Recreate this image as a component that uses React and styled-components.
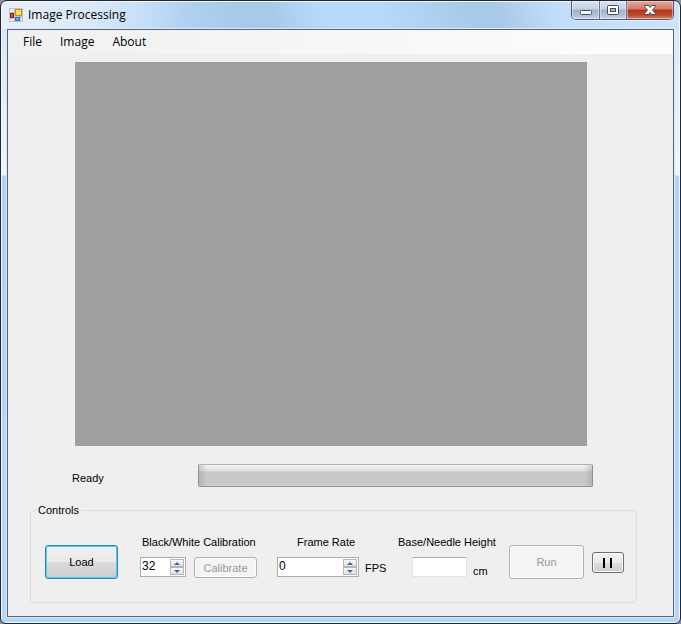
import React from "react";
import styled, { createGlobalStyle, css } from "styled-components";

const Global = createGlobalStyle`
  *, *::before, *::after { box-sizing: border-box; }
  html, body, #root { height: 100%; }
  body { margin: 0; background: #8b8f94; overflow: hidden; }
  button, input { font: inherit; color: inherit; }
`;

const Window = styled.div`
  display: flex;
  flex-direction: column;
  height: 100%;
  padding: 0 6px 6px;
  border: 1px solid #23262f;
  border-radius: 7px 7px 6px 6px;
  box-shadow: inset 0 0 0 1px #f2f8ff;
  background:
    linear-gradient(100deg, #e6f0fa 0, #dbe9f9 90px, rgba(185, 215, 245, 0) 180px) 0 0 / 100% 28px no-repeat,
    linear-gradient(70deg, #b7d7f7 0, #b7d7f7 22%, #a9c9e8 35%, #a9c9e8 40%, #b7d9f9 47%, #b7d9f9 56%, #a9c9e8 69%, #a9c9e8 73%, #c0ddfb 81%, #cfe3fa 100%) 0 0 / 100% 28px no-repeat,
    linear-gradient(#d5e5f6 0, #edf5fd 174px, #b3d3f5 175px, #b3d6fb 100%);
  font: 11px/14px "Liberation Sans", Arial, sans-serif;
  color: #000;
`;

const TitleBar = styled.header`
  display: flex;
  align-items: flex-start;
  height: 28px;
  flex: none;
  padding-left: 2px;
`;

const Title = styled.h1`
  margin: 6px 0 0 5px;
  flex: 1;
  font: 12px/16px "Open Sans", "Segoe UI", sans-serif;
`;

const AppIcon = styled.svg`
  display: block;
  width: 14px;
  height: 14px;
  margin-top: 7px;
`;

const Caption = styled.div`
  display: flex;
  border: 1px solid #505d72;
  border-top: 0;
  border-radius: 0 0 5px 5px;
  overflow: hidden;
  box-shadow: 0 1px 0 0 #e0eefc;
`;

const CaptionButton = styled.button`
  display: flex;
  align-items: center;
  justify-content: center;
  width: ${(p) => (p.$close ? 47 : 27)}px;
  height: 18px;
  padding: 0;
  border: 0;
  border-left: ${(p) => (p.$first ? 0 : "1px solid #6b7890")};
  box-shadow: inset 0 0 0 1px rgba(255, 255, 255, 0.4);
  background: ${(p) =>
    p.$close
      ? "linear-gradient(#e6a999 0, #d07a68 45%, #b5321c 50%, #c04a30 80%, #d98a70 100%)"
      : "linear-gradient(#dbe5f1 0, #c3d0e0 45%, #9fb0c7 50%, #b0c1d8 80%, #c8d9ec 100%)"};
`;

const Client = styled.main`
  display: flex;
  flex-direction: column;
  flex: 1;
  border: 1px solid #566373;
  box-shadow: 0 0 0 1px #dcebfb;
  background: #efefef;
`;

const MenuBar = styled.nav`
  display: flex;
  align-items: center;
  flex: none;
  height: 24px;
  gap: 18px;
  padding-left: 15px;
  background: linear-gradient(90deg, #f0f0f0, #fcfcfc 90%);
  font: 12px/16px "Open Sans", "Segoe UI", sans-serif;
`;

const MenuItem = styled.button`
  padding: 0;
  border: 0;
  background: none;
`;

const Viewport = styled.section`
  flex: 1;
  margin: 8px 86px 0 67px;
  background: #a0a0a0;
`;

const StatusRow = styled.div`
  display: flex;
  align-items: center;
  flex: none;
  margin: 18px 80px 16px 64px;
`;

const Status = styled.output`
  width: 126px;
  padding-top: 4px;
`;

const Progress = styled.div`
  flex: 1;
  height: 23px;
  border: 1px solid #919191;
  border-top-color: #b2b2b2;
  border-radius: 2px;
  background:
    linear-gradient(90deg, rgba(150, 150, 150, 0.4), transparent 8px, transparent calc(100% - 8px), rgba(150, 150, 150, 0.4)),
    linear-gradient(#f4f4f4 0, #dcdcdc 6px, #c9c9c9 7px, #c9c9c9 90%, #d4d4d4 100%);
`;

const Group = styled.fieldset`
  flex: none;
  display: flex;
  align-items: flex-start;
  height: 100px;
  min-width: 0;
  margin: 0 36px 13px 22px;
  padding: 18px 12px 0 14px;
  border: 1px solid #d5dfe5;
  border-radius: 4px;
`;

const Legend = styled.legend`
  margin-left: -9px;
  padding: 0 2px;
`;

const Field = styled.div`
  display: flex;
  flex-direction: column;
  gap: 8px;
  width: ${(p) => p.$width}px;
  margin-left: ${(p) => p.$gap}px;
  white-space: nowrap;
`;

const Label = styled.label`
  padding-left: ${(p) => p.$indent || 0}px;
`;

const Line = styled.div`
  display: flex;
  align-items: flex-start;
  padding-left: ${(p) => p.$indent || 0}px;
`;

const Unit = styled.span`
  margin: ${(p) => (p.$low ? 7 : 4)}px 0 0 6px;
`;

const Spinner = styled.div`
  display: flex;
  width: ${(p) => p.$width}px;
  height: 20px;
  padding: 1px;
  border: 1px solid #abadb3;
  background: #fff;
`;

const SpinInput = styled.input`
  flex: 1;
  min-width: 0;
  height: 14px;
  padding: 0;
  border: 0;
  outline: 0;
  background: none;
  font-size: 12px;
`;

const Steps = styled.div`
  display: grid;
  grid-template-rows: 1fr 1fr;
  width: 14px;
`;

const Step = styled.button`
  display: flex;
  align-items: center;
  justify-content: center;
  min-height: 0;
  padding: 0;
  border: 1px solid #b4b6bb;
  background: linear-gradient(#f8f8f8, #e2e2e6);
`;

const TextBox = styled.input`
  width: 55px;
  height: 20px;
  padding: 0 2px;
  border: 1px solid #e2e3ea;
  border-top-color: #abadb3;
  border-radius: 1px;
  background: #fff;
`;

const kinds = {
  primary: css`
    border: 1px solid #3c7fb1;
    box-shadow: inset 0 0 0 1px #45d0f4;
    background: linear-gradient(#f0f0f0 0, #e9e9e9 50%, #dbdbdb 51%, #cecece 100%);
  `,
  plain: css`
    border: 1px solid #707070;
    box-shadow: inset 0 0 0 1px #fafafa;
    background: linear-gradient(#f2f2f2 0, #ebebeb 50%, #dddddd 51%, #cfcfcf 100%);
  `,
  disabled: css`
    border: 1px solid #adb2b5;
    box-shadow: inset 0 0 0 1px #fafafa;
    background: #f4f4f4;
    color: #9a9a9a;
  `,
};

const Button = styled.button`
  display: flex;
  align-items: center;
  justify-content: center;
  flex: none;
  width: ${(p) => p.$width}px;
  height: ${(p) => p.$height}px;
  margin: ${(p) => p.$top || 0}px 0 0 ${(p) => p.$gap || 0}px;
  padding: 0;
  border-radius: 3px;
  ${(p) => kinds[p.$kind]}
`;

function NumberBox({ id, value, width }) {
  return (
    <Spinner $width={width}>
      <SpinInput id={id} type="text" inputMode="numeric" defaultValue={value} />
      <Steps>
        <Step type="button" aria-label="Increase">
          <svg width="6" height="3" viewBox="0 0 6 3"><path d="M0 3 3 0 6 3z" fill="#4b5fa0" /></svg>
        </Step>
        <Step type="button" aria-label="Decrease">
          <svg width="6" height="3" viewBox="0 0 6 3"><path d="M0 0h6L3 3z" fill="#4b5fa0" /></svg>
        </Step>
      </Steps>
    </Spinner>
  );
}

export default function App() {
  return (
    <>
      <Global />
      <Window>
        <TitleBar>
          <AppIcon viewBox="0 0 14 14" aria-hidden="true">
            <rect width="14" height="14" fill="#bfc1c4" />
            <path d="M1 1h4v3H1zM1 11h4v2H1zM12 10h1v3h-1z" fill="#e9eef4" />
            <rect x="6.5" y="1.5" width="6" height="6" fill="#ffd95c" stroke="#c0901c" />
            <rect x="1.5" y="5.5" width="3" height="4" fill="#dc4a36" stroke="#a01c12" />
            <rect x="6.5" y="9.5" width="4" height="3" fill="#6ba2f2" stroke="#3a6fd0" />
          </AppIcon>
          <Title>Image Processing</Title>
          <Caption>
            <CaptionButton $first aria-label="Minimize">
              <svg width="14" height="16" viewBox="0 0 14 16"><rect x="1.5" y="8.5" width="11" height="4" rx="1" fill="#fff" stroke="#454b60" /></svg>
            </CaptionButton>
            <CaptionButton aria-label="Maximize">
              <svg width="14" height="16" viewBox="0 0 14 16">
                <rect x="1.5" y="3.5" width="11" height="9" rx="1" fill="#fff" stroke="#454b60" />
                <rect x="4.5" y="6.5" width="5" height="3" fill="#a9b9ce" stroke="#454b60" />
              </svg>
            </CaptionButton>
            <CaptionButton $close aria-label="Close">
              <svg width="14" height="16" viewBox="0 0 14 16"><path d="M1.5 3.5h4L7 5.5l1.500-2h4v1L9.500 8l3 3.500v1h-4L7 10.500l-1.500 2h-4v-1L4.500 8l-3-3.500z" fill="#fff" stroke="#4a4655" /></svg>
            </CaptionButton>
          </Caption>
        </TitleBar>
        <Client>
          <MenuBar>
            <MenuItem>File</MenuItem>
            <MenuItem>Image</MenuItem>
            <MenuItem>About</MenuItem>
          </MenuBar>
          <Viewport aria-label="Image preview" />
          <StatusRow>
            <Status>Ready</Status>
            <Progress role="progressbar" aria-valuenow={0} aria-label="Progress" />
          </StatusRow>
          <Group>
            <Legend>Controls</Legend>
            <Button $kind="primary" $width={73} $height={34} $top={10}>Load</Button>
            <Field $width={117} $gap={22}>
              <Label htmlFor="bw" $indent={2}>Black/White Calibration</Label>
              <Line>
                <NumberBox id="bw" value="32" width={46} />
                <Button $kind="disabled" $width={63} $height={21} $gap={8} disabled>Calibrate</Button>
              </Line>
            </Field>
            <Field $width={107} $gap={20}>
              <Label htmlFor="rate" $indent={20}>Frame Rate</Label>
              <Line>
                <NumberBox id="rate" value="0" width={82} />
                <Unit>FPS</Unit>
              </Line>
            </Field>
            <Field $width={97} $gap={14}>
              <Label htmlFor="height">Base/Needle Height</Label>
              <Line $indent={14}>
                <TextBox id="height" type="text" />
                <Unit $low>cm</Unit>
              </Line>
            </Field>
            <Button $kind="disabled" $width={75} $height={34} $gap={14} $top={10} disabled>Run</Button>
            <Button $kind="plain" $width={32} $height={21} $gap={8} $top={17} aria-label="Pause">
              <svg width="10" height="10" viewBox="0 0 10 10"><path d="M1 0v10M8 0v10" stroke="#000" strokeWidth="2" /></svg>
            </Button>
          </Group>
        </Client>
      </Window>
    </>
  );
}
